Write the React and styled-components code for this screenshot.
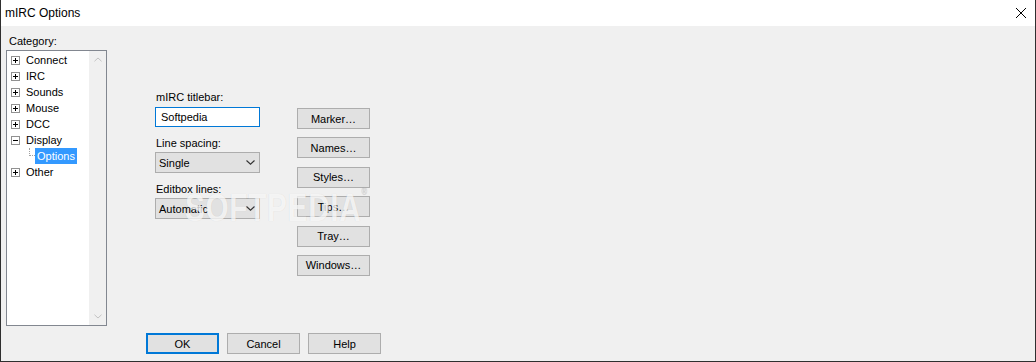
import styled, { createGlobalStyle } from "styled-components";

const GlobalStyle = createGlobalStyle`
  html, body { margin: 0; padding: 0; background: #f0f0f0; }
  body { font-family: "Liberation Sans", Arial, sans-serif; }
`;

const Window = styled.div`
  position: relative;
  width: 1036px;
  height: 362px;
  box-sizing: border-box;
  border: 1px solid #2f2f2f;
  border-top: none;
  background: #f0f0f0;
  display: flex;
  flex-direction: column;
  overflow: hidden;
`;

const TitleBar = styled.div`
  height: 26px;
  background: #fff;
  display: flex;
  align-items: center;
  justify-content: space-between;
  padding: 0 9px 0 4px;
  font-size: 12px;
  color: #000;
`;

const Body = styled.div`
  flex: 1;
  display: flex;
  padding-left: 5px;
  font-size: 11px;
  color: #000;
`;

const LeftColumn = styled.div`
  display: flex;
  flex-direction: column;
  padding-top: 8px;
`;

const Label = styled.div`
  line-height: 15px;
  height: 15px;
  padding-left: ${(p) => p.$indent || 0}px;
  margin-top: ${(p) => p.$top || 0}px;
`;

const Tree = styled.div`
  margin-top: 1px;
  width: 101px;
  height: 276px;
  box-sizing: border-box;
  border: 1px solid #828790;
  background: #fff;
  display: flex;
`;

const TreeList = styled.div`
  flex: 1;
  padding-top: 1px;
`;

const TreeRow = styled.div`
  height: 16px;
  display: flex;
  align-items: center;
  padding-left: ${(p) => p.$indent}px;
  white-space: nowrap;
`;

const Expander = styled.svg`
  width: 9px;
  height: 9px;
  margin-right: 6px;
  flex: none;
`;

const Connector = styled.span`
  align-self: flex-start;
  width: 6px;
  height: 8px;
  border-left: 1px dotted #a0a0a0;
  border-bottom: 1px dotted #a0a0a0;
  box-sizing: border-box;
`;

const Selected = styled.span`
  background: #3399ff;
  color: #fff;
  height: 16px;
  line-height: 16px;
  padding: 0 2px;
`;

const ScrollBar = styled.div`
  width: 17px;
  background: #f0f0f0;
  display: flex;
  flex-direction: column;
  justify-content: space-between;
  align-items: center;
  padding: 6px 0 6px;
`;

const RightSide = styled.div`
  margin-left: 39px;
  display: flex;
  flex-direction: column;
  flex: 1;
  padding-bottom: 7px;
`;

const Content = styled.div`
  display: flex;
  padding: 64px 0 0 9px;
`;

const FormColumn = styled.div`
  width: 105px;
  display: flex;
  flex-direction: column;
`;

const TextInput = styled.div`
  margin-top: 2px;
  height: 20px;
  box-sizing: border-box;
  border: 1px solid #0078d7;
  background: #fff;
  padding-left: 5px;
  line-height: 18px;
`;

const Select = styled.div`
  margin-top: 1px;
  height: 21px;
  box-sizing: border-box;
  border: 1px solid #adadad;
  background: #e1e1e1;
  display: flex;
  align-items: center;
  justify-content: space-between;
  padding: 0 4px 0 3px;
`;

const ButtonColumn = styled.div`
  margin: 18px 0 0 37px;
  display: flex;
  flex-direction: column;
  gap: 8.4px;
`;

const Button = styled.div`
  width: 73px;
  height: 21px;
  box-sizing: border-box;
  border: ${(p) => (p.$default ? "2px solid #0078d7" : "1px solid #adadad")};
  background: #e1e1e1;
  display: flex;
  align-items: center;
  justify-content: center;
  font-size: 11px;
`;

const Footer = styled.div`
  margin-top: auto;
  display: flex;
  gap: 8px;
`;

const Watermark = styled.div`
  position: absolute;
  left: 184px;
  top: 186px;
  font-size: 39px;
  font-weight: bold;
  letter-spacing: 1px;
  color: rgba(255, 255, 255, 0.75);
  text-shadow: 0 0 1px rgba(0, 0, 0, 0.12);
  transform: scaleX(0.76);
  transform-origin: left top;
  pointer-events: none;
  white-space: nowrap;

  sup {
    font-size: 10px;
    vertical-align: top;
    color: rgba(200, 200, 200, 0.5);
  }
`;

const Box = ({ open }) => (
  <Expander viewBox="0 0 9 9">
    <rect x="0.5" y="0.5" width="8" height="8" fill="#fff" stroke="#919191" />
    <path d="M2 4.5h5" stroke="#000" />
    {!open && <path d="M4.5 2v5" stroke="#000" />}
  </Expander>
);

const Chevron = ({ up, color = "#333", w = 9 }) => (
  <svg width={w} height="5" viewBox="0 0 9 5">
    <path
      d={up ? "M0.5 4.5L4.5 0.8L8.5 4.5" : "M0.5 0.5L4.5 4.2L8.5 0.5"}
      fill="none"
      stroke={color}
      strokeWidth="1.1"
    />
  </svg>
);

const categories = ["Connect", "IRC", "Sounds", "Mouse", "DCC"];
const dialogButtons = ["Marker…", "Names…", "Styles…", "Tips…", "Tray…", "Windows…"];

export default function App() {
  return (
    <>
      <GlobalStyle />
      <Window>
        <TitleBar>
          <span>mIRC Options</span>
          <svg width="10" height="10" viewBox="0 0 10 10">
            <path d="M0 0L10 10M10 0L0 10" stroke="#000" strokeWidth="1" />
          </svg>
        </TitleBar>
        <Body>
          <LeftColumn>
            <Label $indent={3}>Category:</Label>
            <Tree>
              <TreeList>
                {categories.map((c) => (
                  <TreeRow key={c} $indent={4}>
                    <Box />
                    {c}
                  </TreeRow>
                ))}
                <TreeRow $indent={4}>
                  <Box open />
                  Display
                </TreeRow>
                <TreeRow $indent={22}>
                  <Connector />
                  <Selected>Options</Selected>
                </TreeRow>
                <TreeRow $indent={4}>
                  <Box />
                  Other
                </TreeRow>
              </TreeList>
              <ScrollBar>
                <Chevron up color="#c2c2c2" w={8} />
                <Chevron color="#c2c2c2" w={8} />
              </ScrollBar>
            </Tree>
          </LeftColumn>
          <RightSide>
            <Content>
              <FormColumn>
                <Label $indent={1}>mIRC titlebar:</Label>
                <TextInput>Softpedia</TextInput>
                <Label $indent={1} $top={9}>Line spacing:</Label>
                <Select>
                  <span>Single</span>
                  <Chevron />
                </Select>
                <Label $indent={1} $top={9}>Editbox lines:</Label>
                <Select>
                  <span>Automatic</span>
                  <Chevron />
                </Select>
              </FormColumn>
              <ButtonColumn>
                {dialogButtons.map((b) => (
                  <Button key={b}>{b}</Button>
                ))}
              </ButtonColumn>
            </Content>
            <Footer>
              <Button $default>OK</Button>
              <Button>Cancel</Button>
              <Button>Help</Button>
            </Footer>
          </RightSide>
        </Body>
        <Watermark>
          SOFTPEDIA<sup>®</sup>
        </Watermark>
      </Window>
    </>
  );
}
